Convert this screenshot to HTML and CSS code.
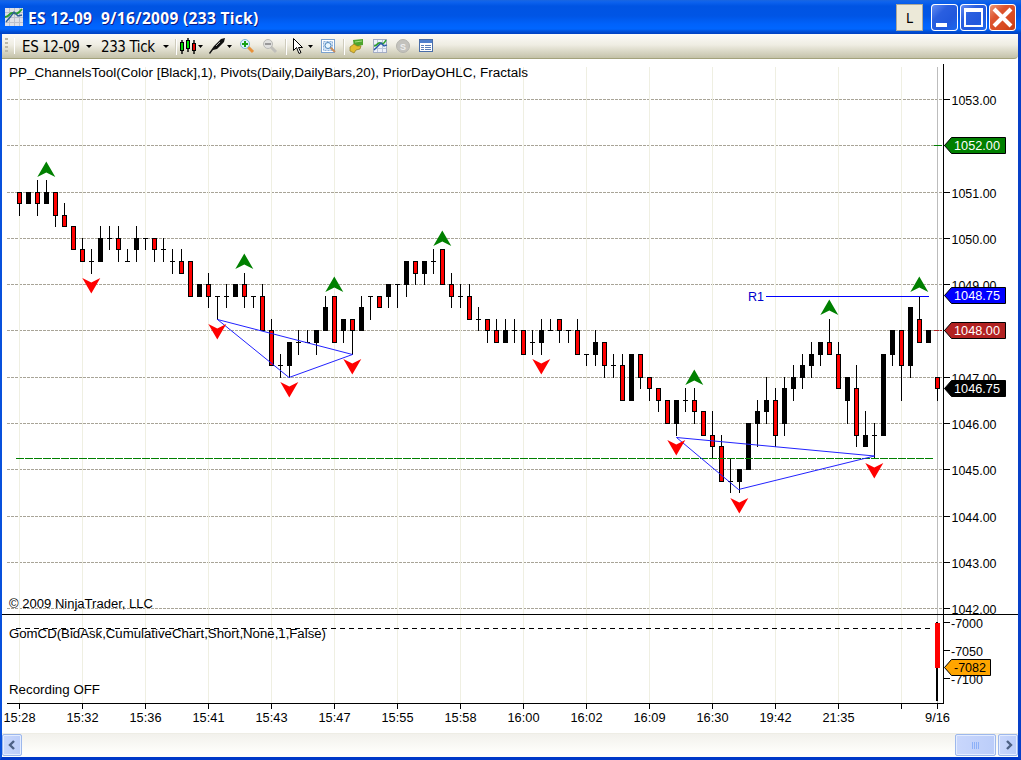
FILE: index.html
```html
<!DOCTYPE html>
<html lang="en">
<head>
  <meta charset="UTF-8" />
  <meta name="viewport" content="width=device-width, initial-scale=1" />
  <title>ES 12-09 9/16/2009 (233 Tick)</title>
  <link rel="stylesheet" href="styles.css">
</head>
<body>

  <div class="window">
    <header class="titlebar">
      <svg class="title-icon" width="18" height="18" viewBox="0 0 18 18">
        <rect x="0" y="0" width="18" height="18" fill="#dfe1e8" />
        <path d="M4.5 0v18M9.5 0v18M14.5 0v18M0 4.5h18M0 9.5h18M0 14.5h18" stroke="#bcc0cc" fill="none" />
        <path d="M0 9c5 0 4-5 8-4s5 1 9-4" stroke="#2ba02b" stroke-width="2" fill="none" />
        <path d="M1 14l5-6 3-4 4 4 4-1" stroke="#2f5f94" stroke-width="1.4" fill="none" />
      </svg>
      <h1 class="title">ES 12-09&nbsp; 9/16/2009 (233 Tick)</h1>
      <button class="link-btn">L</button>
      <div class="controls">
        <button class="ctl"><svg width="27" height="27"><rect x="5" y="19" width="11" height="4" fill="#fff" /></svg></button>
        <button class="ctl"><svg width="27" height="27"><path d="M4 4h19v19H4zM6 8v13h15V8z" fill="#fff" fill-rule="evenodd" /></svg></button>
        <button class="ctl close"><svg width="27" height="27"><path d="M5 5L22 22M22 5L5 22" stroke="#fff" stroke-width="4" /></svg></button>
      </div>
    </header>

    <div class="toolbar">
      <span class="grip"></span>
      <span class="sep"></span>
      <span class="menu instrument">ES 12-09</span><i class="caret"></i>
      <span class="menu period">233 Tick</span><i class="caret"></i>
      <svg class="tools" width="266" height="24" viewBox="174 34 266 24">
        <!-- separators -->
        <path d="M176.5 39v16M286.5 39v16M344.5 39v16" stroke="#fff" />
        <path d="M175.5 39v16M285.5 39v16M343.5 39v16" stroke="#cfccbd" />
        <!-- chart style -->
        <path d="M182 40v14M188 38v14M194 40v14" stroke="#000" stroke-width="1.4" />
        <g stroke="#000">
          <rect x="180.5" y="42.5" width="3" height="8" fill="#0d0" />
          <rect x="186.5" y="40.5" width="3" height="8" fill="#0e0" />
          <rect x="192.5" y="43.5" width="3" height="7" fill="#e00" />
        </g>
        <path d="M198 45h5l-2.5 3zM227 45h5l-2.5 3zM308 45h5l-2.5 3z" fill="#000" />
        <!-- pen -->
        <path d="M209 53l5-7 7-7 4-1-1 4-7 7-4 1-3 4z" fill="#111" />
        <path d="M216 46l4-4" stroke="#aaa" />
        <!-- zoom in / out -->
        <path d="M248 47l5 5" stroke="#e8913a" stroke-width="3" />
        <circle cx="245" cy="44" r="4.5" fill="#dff3ff" stroke="#7db4d4" />
        <path d="M242 44h6M245 41v6" stroke="#18a018" stroke-width="2" />
        <path d="M271 47l5 5" stroke="#c0bfba" stroke-width="3" />
        <circle cx="268" cy="44" r="4.5" fill="#e0e0de" stroke="#b9b9b5" />
        <path d="M265 44h6" stroke="#999" stroke-width="2" />
        <!-- cursor -->
        <path d="M293.5 38.5v12l3-3 2.5 6 2-1-2.5-5h4z" fill="#fff" stroke="#000" />
        <!-- data box -->
        <rect x="321.5" y="39.5" width="13" height="13" fill="#fff" stroke="#7ba2cf" />
        <path d="M323.5 41.5h9v9h-9z" fill="#cfe1f5" stroke="#8fb2da" stroke-dasharray="2 1" />
        <path d="M330 47l5 5" stroke="#c98c5a" stroke-width="2" />
        <circle cx="328" cy="45.5" r="3" fill="#e8f6ff" stroke="#4c86bc" />
        <!-- order entry -->
        <path d="M353 40l10-1v6l-9 2z" fill="#4da52d" />
        <path d="M355 42l7-1" stroke="#a6df85" />
        <path d="M350 47l4-3 3 2 4 0-1 3-4 1-2 3-4-2z" fill="#e2bd32" stroke="#8f781e" stroke-width=".7" />
        <!-- indicators -->
        <rect x="373.5" y="39.5" width="13" height="13" fill="#eef1fa" stroke="#a3acc4" />
        <path d="M377.5 40v12M382.5 40v12M374 44.5h12M374 48.5h12" stroke="#bcc5d8" />
        <path d="M374 46c4 0 3-4 6-3s4 1 6-3" stroke="#2ba02b" stroke-width="1.6" fill="none" />
        <path d="M374 50l4-4 3-3 3 3 3-1" stroke="#2558a8" stroke-width="1.3" fill="none" />
        <!-- strategy, disabled -->
        <circle cx="403" cy="46" r="6.5" fill="#c3c2bd" stroke="#b5b4ae" />
        <text x="403" y="49.5" text-anchor="middle" class="coin">S</text>
        <!-- properties -->
        <rect x="419.5" y="39.5" width="13" height="12" fill="#fff" stroke="#496da8" />
        <rect x="420" y="40" width="12" height="3" fill="#4f7fcc" />
        <path d="M421 45.5h3M421 47.5h3M421 49.5h3M425 45.5h6M425 47.5h6M425 49.5h6" stroke="#5a7fb8" />
      </svg>
    </div>

    <svg id="chart" class="chart" width="1016" height="674" viewBox="2 59 1016 674"></svg>

    <footer class="scrollbar">
      <button class="scroll-btn"><svg width="19" height="20"><path d="M11 6L7 10l4 4" /></svg></button>
      <span class="track"></span>
      <span class="thumb"><i></i><i></i><i></i><i></i></span>
      <button class="scroll-btn"><svg width="19" height="20"><path d="M8 6l4 4-4 4" /></svg></button>
    </footer>
  </div>

  <script src="chart.js"></script>
</body>
</html>
```

FILE: styles.css
```css
* {
  box-sizing: border-box;
}

body {
  margin: 0;
  font-family: 'Liberation Sans', Arial, sans-serif;
  background: #fff;
  overflow: hidden;
}

.window {
  width: 1021px;
  height: 760px;
  display: flex;
  flex-direction: column;
  border: solid #0850dc;
  border-width: 0 3px 3px 2px;
  border-right-color: #0840c8;
  border-bottom-color: #0038c8;
  background: #fff;
}

.titlebar {
  height: 34px;
  flex: none;
  margin: 0 -3px 0 -2px;
  padding: 0 5px;
  display: flex;
  align-items: center;
  background: linear-gradient(#1a66e0 0, #0d62ee 2px, #0054e3 6px, #0055e5 16px, #0062fb 24px, #0066ff 29px, #0053dd 31px, #0040c0 34px);
}

.title-icon {
  flex: none;
}

.title {
  flex: 1;
  margin: 2px 0 0 5px;
  color: #fff;
  font: bold 15.5px 'Open Sans', sans-serif;
  letter-spacing: 0.32px;
  text-shadow: 1px 1px 0 #0a1883;
  white-space: nowrap;
}

button {
  padding: 0;
  border: 0;
}

.link-btn {
  width: 27px;
  height: 27px;
  margin: 1px 8px 0 0;
  background: #ece9d8;
  border: 1px solid #aca899;
  font: 14px 'DejaVu Sans Condensed', sans-serif;
  color: #000;
}

.controls {
  display: flex;
  gap: 2px;
  margin-top: 1px;
}

.ctl {
  width: 27px;
  height: 27px;
  border-radius: 4px;
  overflow: hidden;
  background: linear-gradient(135deg, #6b93f5 0, #2a5fe0 35%, #2258dc 65%, #1a6af0 100%);
  box-shadow: inset 0 0 0 1px #fff;
}

.ctl svg {
  display: block;
}

.close {
  background: linear-gradient(135deg, #f0a080 0, #dd5530 35%, #d84a20 70%, #c03a10 100%);
}

.toolbar {
  height: 25px;
  flex: none;
  display: flex;
  align-items: center;
  padding-left: 3px;
  border-bottom: 1px solid #a3a27c;
  border-bottom-right-radius: 4px;
  background: linear-gradient(#fcfbf8, #efede3 45%, #c4c2a9);
  font: 15px 'DejaVu Sans Condensed', sans-serif;
}

.grip {
  width: 3px;
  height: 16px;
  background: repeating-linear-gradient(#bcb9a8 0 2px, transparent 2px 4px);
}

.sep {
  width: 1px;
  height: 16px;
  margin: 0 7px 0 6px;
  background: #fff;
}

.instrument {
  width: 59px;
}

.period {
  width: 57px;
}

.menu {
  padding-top: 1px;
  white-space: nowrap;
  letter-spacing: -0.4px;
}

.caret {
  margin: 1px 9px 0 5px;
  border: 3px solid transparent;
  border-top-color: #000;
  border-bottom: 0;
}

.tools {
  flex: none;
  margin-left: -4px;
}

.coin {
  font: bold 9px 'Liberation Sans', sans-serif;
  fill: #eee;
}

.chart {
  display: block;
  flex: none;
  font-size: 13.7px;
}

.crisp {
  shape-rendering: crispEdges;
}

.scrollbar {
  height: 24px;
  display: flex;
  align-items: flex-start;
  border-top: 1px solid #eeede5;
  background: linear-gradient(#f2f1ec, #fefefb 80%);
}

.track {
  flex: 1;
}

.scroll-btn,
.thumb {
  height: 22px;
  border: 1px solid #9db8ec;
  border-radius: 2px;
  background: linear-gradient(90deg, #c9d7fc, #bbcdf9);
  box-shadow: inset 0 0 0 1px #e4ecff;
}

.scroll-btn {
  width: 20px;
}

.scroll-btn svg {
  display: block;
}

.scroll-btn path {
  fill: none;
  stroke: #4d6185;
  stroke-width: 2.4;
}

.thumb {
  width: 41px;
  margin-right: 2px;
  display: flex;
  justify-content: center;
  align-items: center;
  gap: 1px;
}

.thumb i {
  width: 1px;
  height: 7px;
  background: #8cb0f8;
}
```

FILE: chart.js
```js
// Levels are counted in 0.25 ticks down from 1053.00: [high, low, open, close]
const bars = [
  [8,10,8,9],[8,9,9,8],[7,10,8,9],[7,9,9,8],[8,11,8,10],[9,11,10,11],[11,13,11,13],[12,14,13,14],[13,15,14,14],[11,14,14,12],
  [11,13,12,12],[11,14,12,13],[13,14,14,14],[11,14,13,12],[12,13,12,12],[12,14,12,13],[12,14,13,13],[13,15,14,14],[13,15,14,15],[14,17,14,17],
  [16,17,17,16],[15,18,16,17],[17,19,17,17],[16,18,17,17],[16,17,17,16],[15,18,16,17],[17,18,17,17],[16,20,17,20],[19,23,20,23],[22,24,23,23],
  [21,24,23,21],[20,22,21,21],[20,21,21,21],[20,22,21,20],[17,20,20,18],[17,21,17,21],[19,21,20,19],[19,22,19,20],[17,20,20,18],[17,19,17,17],
  [17,18,17,18],[16,18,17,16],[16,18,16,16],[14,17,16,14],[14,16,14,15],[14,16,15,14],[13,15,14,14],[13,16,13,16],[15,18,16,17],[16,18,17,17],
  [16,19,17,19],[18,20,19,19],[19,21,19,20],[19,21,20,21],[19,21,21,20],[19,21,20,20],[20,22,20,22],[20,22,21,21],[19,22,21,20],[19,20,20,20],
  [19,21,19,20],[20,21,20,20],[19,22,20,22],[22,23,22,22],[20,23,22,21],[21,24,21,23],[22,24,23,23],[22,26,23,26],[22,26,26,22],[22,25,22,24],
  [24,26,24,25],[25,27,25,26],[26,28,26,28],[26,29,28,26],[25,27,26,26],[25,28,26,27],[27,29,27,29],[27,31,29,30],[29,33,30,33],[31,34,33,33],
  [32,34,33,32],[28,32,32,28],[26,30,28,27],[24,28,27,26],[25,30,26,29],[24,29,28,25],[23,26,25,24],[22,25,24,23],[21,24,23,22],[21,23,22,21],
  [19,22,21,22],[21,25,22,25],[24,28,26,24],[23,30,25,29],[27,30,30,29],[28,31,29,29],[22,29,29,22],[20,23,22,20],[20,26,20,23],[18,24,23,18],
  [17,21,19,21],[20,21,21,20],[24,26,24,25]
];

const times = ['15:28', '15:32', '15:36', '15:41', '15:43', '15:47', '15:55', '15:58', '16:00', '16:02', '16:09', '16:30', '19:42', '21:35', ''];
const upFractals = [[46,162],[244,254],[334,277],[442,231],[694,370],[829,300],[919,277]];
const downFractals = [[91,279],[217,325],[289,383],[352,360],[541,360],[676,441],[739,499],[874,464]];

const levelY = q => Math.floor(99.6 + 11.5675 * q);
const rect = (x, y, w, h, fill) => `<rect x="${x}" y="${y}" width="${w}" height="${h}" fill="${fill}"/>`;
const dash = (x1, x2, y, color, pattern) => `<path d="M${x1} ${y + 0.5}H${x2}" stroke="${color}" stroke-dasharray="${pattern}"/>`;
const text = (x, y, str, width, fill = '#000') =>
  `<text x="${x}" y="${y}" fill="${fill}" textLength="${width}" lengthAdjust="spacingAndGlyphs">${str}</text>`;

function tag(y, str, fill, color, right = 1006) {
  return `<path d="M944.5 ${y + 0.5}L951.5 ${y - 7.5}H${right - 0.5}V${y + 8.5}H951.5Z" fill="${fill}" stroke="#000"/>` +
    text(954, y + 5, str, right === 1006 ? 46 : 32, color);
}

let lines = '';
let labels = '';

// grid and price scale
for (let k = 0; k < 12; k++) {
  const y = levelY(k * 4);
  lines += dash(7, 942, y, '#a8a497', '3 1') + rect(943, y, 7, 1, '#000');
  if (k !== 1 && k !== 5) labels += text(951.5, y + 6, (1053 - k) + '.00', 45);
}
times.forEach((t, i) => {
  const x = 19 + i * 63;
  lines += rect(x, 67, 1, 636, '#efefe2') + rect(x, 703, 1, 6, '#000');
  if (t) labels += text(x - 15.5, 722, t, 32);
});
lines += rect(937, 67, 1, 636, '#bdbdbd') + rect(937, 703, 1, 6, '#000');
labels += text(925, 722, '9/16', 25);

// candles
bars.forEach(([high, low, open, close], i) => {
  const x = 19 + i * 9;
  const top = levelY(Math.min(open, close));
  const height = levelY(Math.max(open, close)) - top + 1;
  lines += rect(x, levelY(high), 1, levelY(low) - levelY(high) + 1, '#000');
  lines += rect(x - 2, top, 5, height, '#000');
  if (close > open) lines += rect(x - 1, top + 1, 3, height - 2, '#f00');
});

// previous day levels
lines += dash(16, 933, 458, '#008000', '8 1');
lines += rect(766, 296, 163, 1, '#00f');
lines += rect(934, 145, 8, 1, '#008000') + dash(934, 942, 330, '#b22222', '5 1');

// axes
lines += rect(943, 64, 1, 640, '#000') + rect(7, 703, 937, 1, '#000') + rect(2, 614, 1016, 1, '#000');

// lower panel
[[622, '-7000'], [650, '-7050'], [678, '-7100']].forEach(([y, t]) => {
  lines += rect(943, y, 7, 1, '#000');
  labels += text(951, y + 6, t, 32);
});
lines += rect(936, 622, 2, 79, '#000') + rect(935, 623, 5, 45, '#f00');

labels += text(9, 77, 'PP_ChannelsTool(Color [Black],1), Pivots(Daily,DailyBars,20), PriorDayOHLC, Fractals', 519);
labels += text(9, 608, '© 2009 NinjaTrader, LLC', 144);
labels += text(9, 638, 'GomCD(BidAsk,CumulativeChart,Short,None,1,False)', 317);
labels += text(9, 694, 'Recording OFF', 91);
labels += text(748, 301, 'R1', 16, '#00c');

const channels =
  `<path d="M217.5 319.5L352.5 354.5L289 377.5ZM676.5 437.5L874.5 456L738.5 489.5Z" fill="none" stroke="#22f"/>`;

const arrows =
  upFractals.map(([x, y]) => `<path d="M${x + 0.3} ${y - 0.5}l9 15.5l-9-4.5l-9 4.500z" fill="#008000"/>`).join('') +
  downFractals.map(([x, y]) => `<path d="M${x + 0.3} ${y + 14.5}l9-15.5l-9 4.5l-9-4.500z" fill="#f00"/>`).join('');

document.getElementById('chart').innerHTML =
  `<g class="crisp">${lines}</g>` + channels + arrows + labels +
  `<g class="crisp">${dash(16, 931, 628, '#000', '5 4')}</g>` +
  tag(145, '1052.00', '#008000', '#fff') +
  tag(295, '1048.75', '#00f', '#fff') +
  tag(330, '1048.00', '#b22222', '#fff') +
  tag(388, '1046.75', '#000', '#fff') +
  tag(667, '-7082', '#ffa500', '#000', 991);
```
